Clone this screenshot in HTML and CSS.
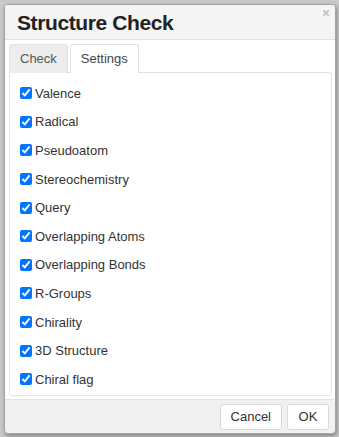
FILE: index.html
```html
<!DOCTYPE html>
<html lang="en">
<head>
    <meta charset="UTF-8">
    <title>Structure Check</title>
    <link rel="stylesheet" href="styles.css">
</head>
<body>
    <div class="dialog">
        <div class="dialog-header">
            <h1 class="title">Structure Check</h1>
            <svg class="close" width="6" height="6" viewBox="0 0 6 6">
                <path d="M0.5 0.5 L5.5 5.5 M5.5 0.5 L0.5 5.5" stroke="#c4c4c4" stroke-width="1.8" stroke-linecap="square"/>
            </svg>
        </div>
        <div class="dialog-body">
            <div class="tabs">
                <div class="tab">Check</div>
                <div class="tab active">Settings</div>
            </div>
            <div class="panel">
                <label class="option"><input type="checkbox" checked>Valence</label>
                <label class="option"><input type="checkbox" checked>Radical</label>
                <label class="option"><input type="checkbox" checked>Pseudoatom</label>
                <label class="option"><input type="checkbox" checked>Stereochemistry</label>
                <label class="option"><input type="checkbox" checked>Query</label>
                <label class="option"><input type="checkbox" checked>Overlapping Atoms</label>
                <label class="option"><input type="checkbox" checked>Overlapping Bonds</label>
                <label class="option"><input type="checkbox" checked>R-Groups</label>
                <label class="option"><input type="checkbox" checked>Chirality</label>
                <label class="option"><input type="checkbox" checked>3D Structure</label>
                <label class="option"><input type="checkbox" checked>Chiral flag</label>
            </div>
        </div>
        <div class="dialog-footer">
            <button class="btn">Cancel</button>
            <button class="btn">OK</button>
        </div>
    </div>
</body>
</html>
```
FILE: styles.css
```css
body {
    margin: 0;
    background: #c9c9c9;
    font-family: "Liberation Sans", Arial, sans-serif;
    font-size: 13px;
    color: #333;
}

.dialog {
    margin: 4px;
    width: 332px;
    height: 430px;
    background: #f1f1f1;
    border: 1px solid #a4a4a4;
    border-radius: 4px;
    box-shadow: 1px 2px 4px rgba(0, 0, 0, 0.35);
    display: flex;
    flex-direction: column;
    box-sizing: border-box;
    overflow: hidden;
}

.dialog-header {
    height: 34px;
    background: #f4f4f4;
    border-bottom: 1px solid #e2e2e2;
    position: relative;
    padding-left: 12px;
}

.title {
    margin: 0;
    font-family: "Liberation Sans", Arial, sans-serif;
    font-size: 21px;
    font-weight: bold;
    letter-spacing: -0.4px;
    line-height: 36px;
    color: #222;
}

.close {
    position: absolute;
    top: 5px;
    right: 6px;
}

.dialog-body {
    background: #fff;
    padding: 4px 3px 3px 4px;
    border-bottom: 1px solid #e2e2e2;
}

.tabs {
    display: flex;
    gap: 2px;
    margin-bottom: -1px;
}

.tab {
    padding: 0 10px;
    height: 28px;
    line-height: 28px;
    font-size: 13px;
    color: #555;
    background: #ededed;
    border: 1px solid #e3e3e3;
    border-bottom: none;
    border-radius: 3px 3px 0 0;
}

.tab.active {
    position: relative;
    z-index: 1;
    background: #fff;
    color: #444;
}

.panel {
    border: 1px solid #e3e3e3;
    border-radius: 0 3px 3px 3px;
    height: 324px;
    padding: 6px 0 0 7px;
    box-sizing: border-box;
}

.option {
    display: flex;
    align-items: center;
    height: 28.6px;
    font-size: 13px;
}

.option input {
    margin: 0 3px 0 3px;
    width: 12px;
    height: 12px;
}

.dialog-footer {
    flex: 1;
    display: flex;
    justify-content: flex-end;
    align-items: center;
    gap: 5px;
    padding-right: 6px;
}

.btn {
    font-family: "Liberation Sans", Arial, sans-serif;
    font-size: 13px;
    color: #333;
    background: #fff;
    border: 1px solid #d9d9d9;
    border-radius: 3px;
    height: 26px;
    min-width: 42px;
    padding: 0 10px;
}
```
